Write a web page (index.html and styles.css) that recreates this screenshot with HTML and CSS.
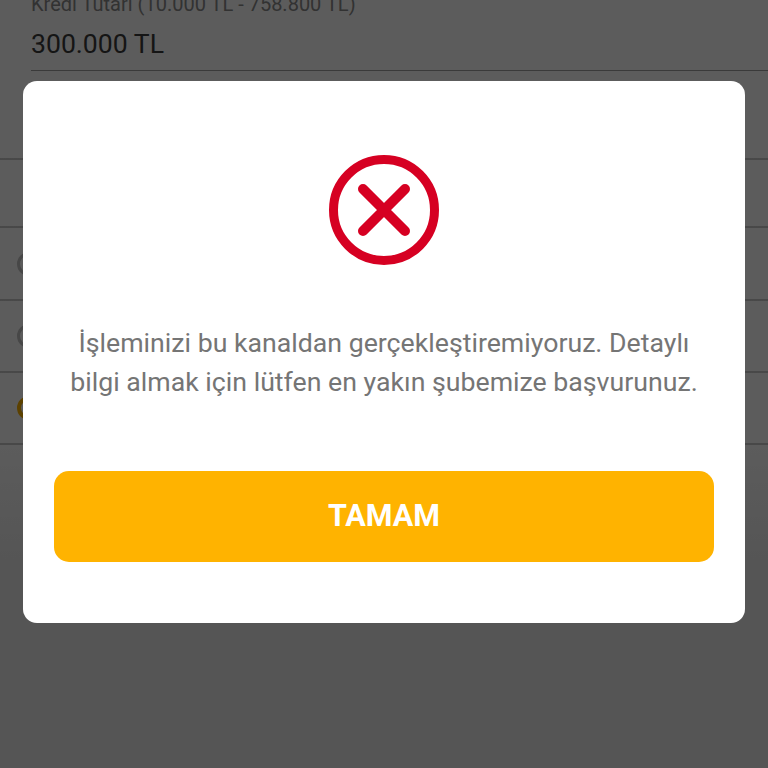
FILE: index.html
```html
<!DOCTYPE html>
<html lang="tr">
<head>
<meta charset="utf-8">
<title>Kredi</title>
<link rel="stylesheet" href="styles.css">
</head>
<body>
<main class="page">
  <section class="field">
    <div class="field-label">Kredi Tutarı (10.000 TL - 758.800 TL)</div>
    <div class="field-value">300.000 TL</div>
  </section>
  <section class="rows">
    <div class="row row-first"></div>
    <div class="row row-second"><span class="radio"></span></div>
    <div class="row row-third"><span class="radio"></span></div>
    <div class="row row-fourth"><span class="radio radio-on"></span></div>
  </section>
</main>
<div class="overlay"></div>
<div class="dialog" role="dialog">
  <svg class="dialog-icon" width="112" height="112" viewBox="0 0 112 112" aria-hidden="true">
    <circle cx="56" cy="56" r="50.5" fill="none" stroke="#d60022" stroke-width="9"/>
    <path d="M35 35L77 77M77 35L35 77" fill="none" stroke="#d60022" stroke-width="10" stroke-linecap="round"/>
  </svg>
  <p class="dialog-text">İşleminizi bu kanaldan gerçekleştiremiyoruz. Detaylı<br>bilgi almak için lütfen en yakın şubemize başvurunuz.</p>
  <button class="dialog-button" type="button">TAMAM</button>
</div>
</body>
</html>
```
FILE: styles.css
```css
html, body {
  margin: 0;
  height: 100%;
}
body {
  position: relative;
  width: 768px;
  height: 768px;
  overflow: hidden;
  background: #fff;
  font-family: Roboto, "Liberation Sans", sans-serif;
}
.page {
  display: flex;
  flex-direction: column;
  height: 768px;
}
.field {
  margin: -8px 0 0 31px;
  height: 78px;
  border-bottom: 1px solid #a0a0a0;
}
.field-label {
  font-size: 20px;
  line-height: 24px;
  color: #8a8a8a;
}
.field-value {
  margin-top: 12px;
  font-size: 26.6px;
  line-height: 32px;
  color: #3a3a3a;
}
.rows {
  margin-top: 87px;
  border-top: 2px solid #c8c8c8;
}
.row {
  display: flex;
  align-items: center;
  border-bottom: 2px solid #c8c8c8;
  padding-left: 17px;
}
.row-first { height: 66px; }
.row-second { height: 71px; }
.row-third { height: 70px; }
.row-fourth { height: 70px; }
.radio {
  width: 24px;
  height: 24px;
  box-sizing: border-box;
  border: 3px solid #c4c4c4;
  border-radius: 50%;
}
.radio-on {
  border-color: #ffb300;
  border-width: 4px;
}
.overlay {
  position: absolute;
  inset: 0;
  background: linear-gradient(to bottom, rgba(0, 0, 0, 0.64) 0, rgba(0, 0, 0, 0.64) 440px, rgba(0, 0, 0, 0.667) 560px, rgba(0, 0, 0, 0.667) 100%);
}
.dialog {
  position: absolute;
  left: 23px;
  top: 81px;
  width: 722px;
  height: 542px;
  box-sizing: border-box;
  padding: 73px 31px 0;
  display: flex;
  flex-direction: column;
  align-items: center;
  background: #fff;
  border-radius: 14px;
}
.dialog-icon {
  display: block;
}
.dialog-text {
  margin: 58px 0 0;
  font-size: 26.7px;
  line-height: 39px;
  text-align: center;
  color: #757575;
  white-space: nowrap;
}
.dialog-button {
  margin-top: 69px;
  width: 660px;
  height: 91px;
  flex: none;
  border: 0;
  border-radius: 15px;
  padding: 0 0 2px;
  background: #ffb300;
  color: #fff;
  font-family: Roboto, "Liberation Sans", sans-serif;
  font-size: 30.5px;
  font-weight: 700;
}
```
